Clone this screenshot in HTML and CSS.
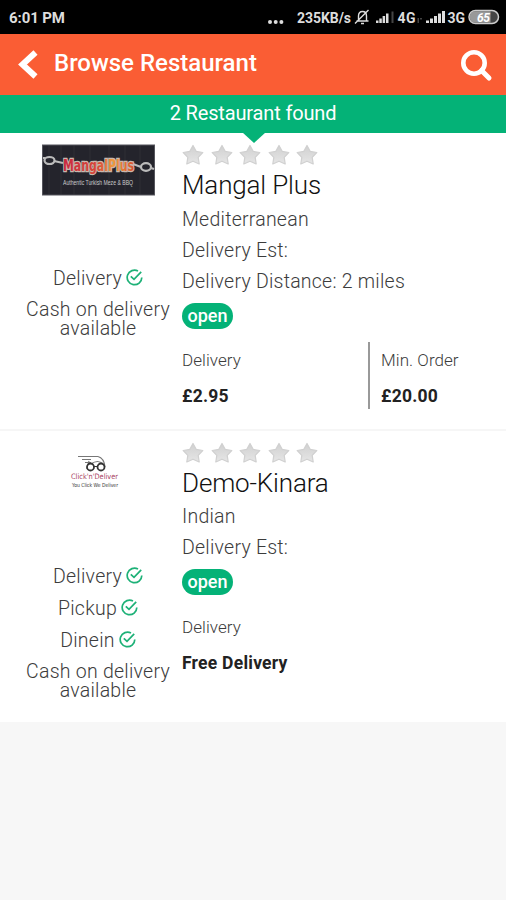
FILE: index.html
```
<!DOCTYPE html>
<html lang="en">
<head>
<meta charset="utf-8">
<title>Browse Restaurant</title>
<link rel="stylesheet" href="styles.css">
</head>
<body>
<svg width="0" height="0" class="defs" aria-hidden="true">
  <defs>
    <linearGradient id="starfill" x1="0" y1="0" x2="0" y2="1"><stop offset="0" stop-color="#d0d0d0"/><stop offset="1" stop-color="#e6e6e6"/></linearGradient>
    <linearGradient id="fire" x1="0" y1="0" x2="1" y2="0"><stop offset="0" stop-color="#c9283f"/><stop offset=".5" stop-color="#d84a38"/><stop offset=".7" stop-color="#ef9b3c"/><stop offset="1" stop-color="#d9512d"/></linearGradient>
    <symbol id="star" viewBox="0 0 22 22"><path d="M11 1.500 14.200 7.400 20.800 8.500 16.200 13.400 17.200 20 11 17.200 4.800 20 5.800 13.400 1.200 8.500 7.800 7.400Z" fill="url(#starfill)" stroke="#d0d0d0" stroke-width="1.200" stroke-linejoin="round"/></symbol>
    <symbol id="check" viewBox="0 0 17 17"><path d="M12 2A7.300 7.300 0 1 0 15.800 8.500M4.800 7.300 8 10.300 15.200 2.800" fill="none" stroke="#1db177" stroke-width="1.700"/></symbol>
  </defs>
</svg>
<div class="status">
  <span class="time">6:01 PM</span>
  <svg class="tray" width="240" height="34" viewBox="266 0 240 34">
    <g fill="#ddd">
      <circle cx="270" cy="22" r="2"/><circle cx="275.700" cy="22" r="2"/><circle cx="281.400" cy="22" r="2"/>
      <text x="297" y="23" textLength="54">235KB/s</text>
      <text x="397.500" y="23" textLength="18">4G</text>
      <text x="447.500" y="23" textLength="17.500">3G</text>
      <path d="M376 20.500h2.500V23H376zM379.300 18.500h2.500V23h-2.500zM382.600 16h2.500v7h-2.500zM386 13.500h2.500V23H386z"/>
      <path d="M426 20.500h3V23h-3zM430 18.500h3V23h-3zM434 16h3v7h-3zM438 13.500h3V23h-3zM442 11h3v12h-3z"/>
    </g>
    <path d="M391.500 11.500h2V23h-2zM417.500 18h1.500v5h-1.500zM420 18h2v1.500h-2z" fill="#444"/>
    <path d="M356.500 21h12M358.500 20.500V16q0-4.500 4-4.500t4 4.500v4.500M361 23.500h3M355 23.500 368.500 10" fill="none" stroke="#ddd" stroke-width="1.400"/>
    <rect x="469" y="10.500" width="29.500" height="13" rx="6.500" fill="#444" stroke="#ccc" stroke-width="1.500"/>
    <path d="M475.500 11.300h15v11.400h-15q-5.700 0-5.700-5.700t5.700-5.700z" fill="#999"/>
    <text class="batt" x="477" y="21.500" textLength="13" fill="#fff">65</text>
  </svg>
</div>
<header class="bar">
  <svg class="back" width="22" height="32" viewBox="0 0 22 32"><path d="M19.500 3.500 6.500 15.500 19.500 27.500" fill="none" stroke="#fff" stroke-width="6"/></svg>
  <h1>Browse Restaurant</h1>
  <svg class="search" width="32" height="32" viewBox="0 0 32 32"><g fill="none" stroke="#fff"><circle cx="13" cy="13" r="10.700" stroke-width="4.600"/><path d="M20.500 20.500 28 28" stroke-width="5" stroke-linecap="round"/></g></svg>
</header>
<div class="found">2 Restaurant found</div>
<main>
  <section class="card first">
    <div class="side">
      <svg class="logo" width="114" height="52" viewBox="0 0 114 52">
        <rect x="1.500" y="1" width="112" height="50" fill="#24242c"/>
        <path d="M8 1V51M20 1V51M33 1V51M49 1V51M68 1V51M84 1V51M99 1V51" stroke="#2e2e35" stroke-width="1"/>
        <rect x="1.500" y="1" width="112" height="50" fill="none" stroke="#55555c"/>
        <g fill="none" stroke="#bbb" stroke-width="2.200"><path d="M2 14 4 14M13 17 22 19M92 20 100 23M110 24 113 25"/><ellipse cx="8.500" cy="16.500" rx="5" ry="3.500"/><ellipse cx="105" cy="23" rx="5" ry="3.800"/></g>
        <text class="mangal" x="22" y="27" textLength="71" lengthAdjust="spacingAndGlyphs">MangalPlus</text>
        <text class="tag" x="22" y="41" textLength="70" lengthAdjust="spacingAndGlyphs">Authentic Turkish Meze &amp; BBQ</text>
      </svg>
      <ul class="services"><li>Delivery <svg><use href="#check"/></svg></li></ul>
      <p class="cash">Cash on delivery available</p>
    </div>
    <div class="info">
      <div class="stars"><svg><use href="#star"/></svg><svg><use href="#star"/></svg><svg><use href="#star"/></svg><svg><use href="#star"/></svg><svg><use href="#star"/></svg></div>
      <h2>Mangal Plus</h2>
      <p>Mediterranean</p>
      <p>Delivery Est:</p>
      <p>Delivery Distance: 2 miles</p>
      <span class="pill">open</span>
      <div class="fees">
        <dl><dt>Delivery</dt><dd>£2.95</dd></dl>
        <dl class="min"><dt>Min. Order</dt><dd>£20.00</dd></dl>
      </div>
    </div>
  </section>
  <section class="card second">
    <div class="side">
      <svg class="logo" width="114" height="52" viewBox="0 0 114 52">
        <path d="M37 14.500H57M41 17.500H50M44 20.500H50M57 14.500Q63 16 64 25M48 19 46 27M50 22Q57 17 62 22" fill="none" stroke="#777" stroke-width="1.200"/>
        <g fill="#fff" stroke="#333" stroke-width="1.800"><circle cx="49.500" cy="25" r="3.500"/><circle cx="60" cy="25" r="3.500"/></g><path d="M53 24.500h3.500" stroke="#333"/>
        <text class="click" x="30" y="37" textLength="47" lengthAdjust="spacingAndGlyphs">Click'n'Deliver</text>
        <text class="you" x="31" y="45" textLength="46" lengthAdjust="spacingAndGlyphs">You Click We Deliver</text>
      </svg>
      <ul class="services"><li>Delivery <svg><use href="#check"/></svg></li><li>Pickup <svg><use href="#check"/></svg></li><li>Dinein <svg><use href="#check"/></svg></li></ul>
      <p class="cash">Cash on delivery available</p>
    </div>
    <div class="info">
      <div class="stars"><svg><use href="#star"/></svg><svg><use href="#star"/></svg><svg><use href="#star"/></svg><svg><use href="#star"/></svg><svg><use href="#star"/></svg></div>
      <h2>Demo-Kinara</h2>
      <p>Indian</p>
      <p>Delivery Est:</p>
      <span class="pill">open</span>
      <div class="fees">
        <dl><dt>Delivery</dt><dd>Free Delivery</dd></dl>
      </div>
    </div>
  </section>
</main>
</body>
</html>
```
FILE: styles.css
```
* { box-sizing: border-box; margin: 0; padding: 0; }
body { background: #f7f7f7; font-family: Roboto, "Liberation Sans", sans-serif; color: #3c3c3c; }
.defs { position: absolute; }
.status { height: 34px; background: #000; display: flex; justify-content: space-between; align-items: center; }
.time { padding: 2px 0 0 9px; color: #ddd; font-size: 15px; font-weight: 700; letter-spacing: -.1px; }
.tray text { font-size: 14px; font-weight: 700; }
.tray .batt { font-size: 12px; font-style: italic; }
.bar { height: 61px; background: #fa5d34; color: #fff; display: flex; align-items: center; padding: 0 13px 4px 16px; }
.back { margin-top: 4px; }
h1 { flex: 1; padding-left: 16px; font-size: 24px; font-weight: 500; line-height: 30px; }
.search { margin-top: 7px; }
.found { position: relative; height: 38px; background: #04b277; color: #fff; text-align: center; font-size: 20px; line-height: 36px; letter-spacing: -.15px; }
.found::after { content: ""; position: absolute; top: 37px; left: 242px; border: solid transparent; border-width: 11px 12px 0; border-top-color: #04b277; }
.card { display: flex; background: #fff; }
.first { height: 298px; border-bottom: 2px solid #f6f6f6; }
.second { height: 291px; }
.side { width: 164px; margin-left: 16px; padding-top: 11px; display: flex; flex-direction: column; align-items: center; text-align: center; font-size: 19.500px; font-weight: 300; letter-spacing: .25px; }
.logo { display: block; margin-bottom: 67px; overflow: visible; }
.second .logo { margin-bottom: 66.500px; }
.services { list-style: none; }
.services li { height: 32px; line-height: 32px; display: flex; justify-content: center; align-items: center; gap: 4px; }
.services svg { width: 17px; height: 17px; margin-bottom: 3px; }
.cash { width: 156px; line-height: 19px; margin-top: 5px; }
.info { flex: 1; margin-left: 2px; padding-top: 11px; font-size: 19.500px; font-weight: 300; letter-spacing: .24px; }
.stars { display: flex; gap: 6.500px; height: 22px; }
.stars svg { width: 22px; height: 22px; }
h2 { height: 37px; line-height: 39px; font-size: 26px; font-weight: 300; color: #111; letter-spacing: -.15px; }
.info p { height: 31px; line-height: 31px; }
.first .info p { line-height: 33px; }
.pill { display: block; width: 51px; height: 26px; margin-top: 7px; border-radius: 13px; background: #04b277; color: #fff; text-align: center; font-size: 18px; font-weight: 500; line-height: 25px; letter-spacing: 0; }
.second .pill { margin-top: 6px; margin-bottom: 14px; }
.fees { display: flex; margin-top: 13px; height: 67px; }
.fees dl { width: 186px; }
.fees .min { border-left: 2px solid #999; padding-left: 11px; width: auto; }
dt { font-size: 17px; line-height: 37px; height: 36px; letter-spacing: .05px; }
dd { font-size: 17.500px; line-height: 37px; font-weight: 700; color: #222; }
.mangal { font: 700 15px "DejaVu Sans", sans-serif; letter-spacing: 0; fill: url(#fire); stroke: #c9b7ad; stroke-width: 2.500px; paint-order: stroke; }
.tag { font: 8px "Liberation Sans", sans-serif; letter-spacing: 0; fill: #ccc; }
.click { font: 7.500px "DejaVu Sans", sans-serif; letter-spacing: 0; fill: #a84361; }
.you { font: 5.500px "DejaVu Sans", sans-serif; letter-spacing: 0; fill: #333; }
```
